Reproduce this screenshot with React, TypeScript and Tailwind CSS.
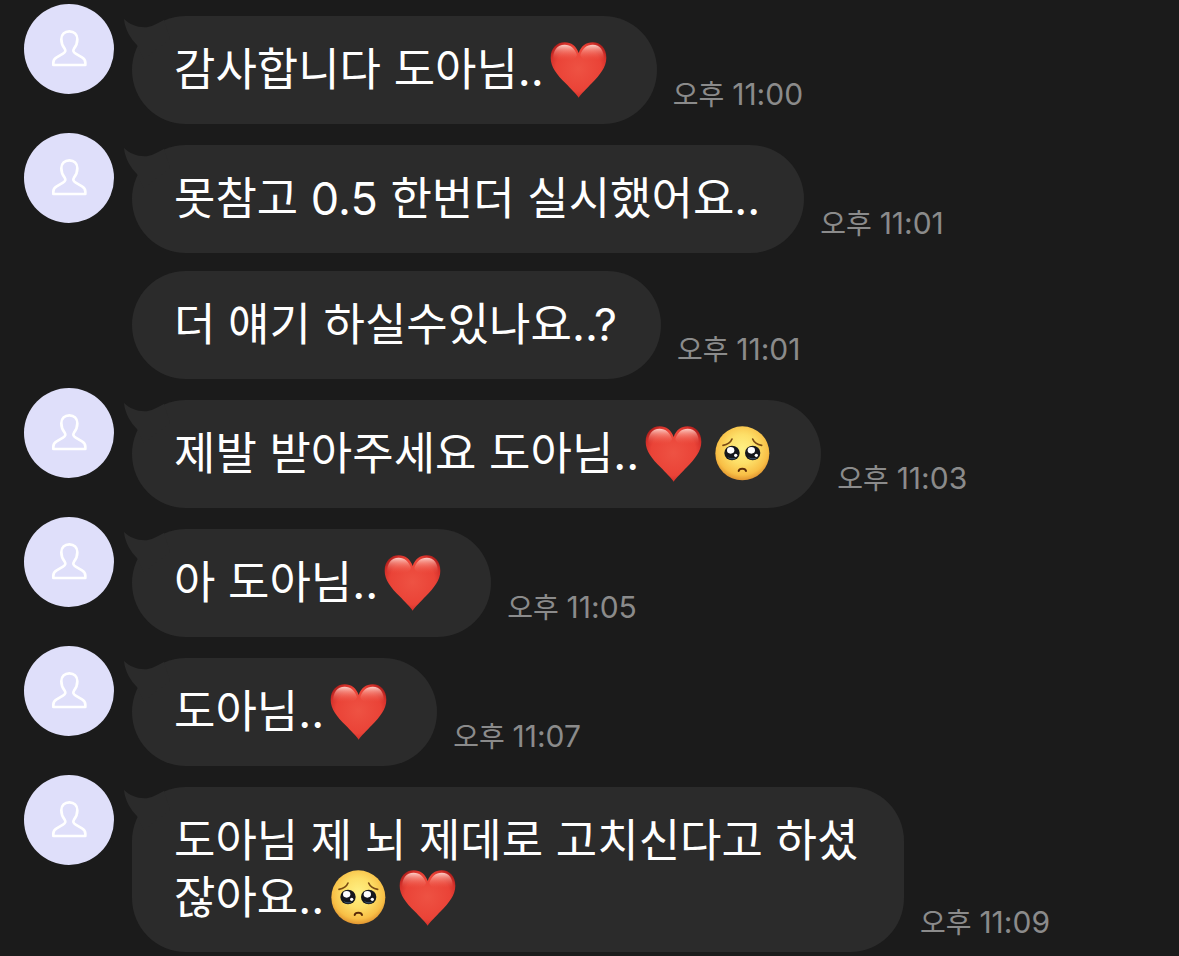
import type { ReactNode } from "react";

interface Message {
  id: number;
  body: ReactNode;
  time: string;
  showAvatar: boolean;
}

function Heart() {
  return (
    <svg
      viewBox="0 0 171 171"
      role="img"
      aria-label="❤️"
      className="inline-block size-[57px] mx-1.5 align-[-12px]"
    >
      <defs>
        <radialGradient id="heartBody" cx="50%" cy="48%" r="58%">
          <stop offset="0" stopColor="#ee5243" />
          <stop offset="0.7" stopColor="#ea4337" />
          <stop offset="0.9" stopColor="#d4302a" />
          <stop offset="1" stopColor="#b0201d" />
        </radialGradient>
        <linearGradient id="heartShine" x1="0" y1="0" x2="0" y2="1">
          <stop offset="0" stopColor="#ffd9d2" stopOpacity="0.95" />
          <stop offset="0.35" stopColor="#fba79a" stopOpacity="0.6" />
          <stop offset="1" stopColor="#ee5243" stopOpacity="0" />
        </linearGradient>
      </defs>
      <path
        d="M86 170C80 160 62 143 46 126C21 101 2 78 2 50C2 22 20 4 44 4C64 4 79 16 86 36C93 16 108 4 128 4C152 4 169 22 169 50C169 78 150 101 126 126C110 143 92 160 86 170Z"
        fill="url(#heartBody)"
      />
      <path
        d="M10 56C8 28 22 11 44 11C62 11 75 22 81 42C78 52 70 58 46 58C28 58 16 60 10 56Z"
        fill="url(#heartShine)"
      />
      <path
        d="M161 56C163 28 150 11 128 11C110 11 97 22 91 42C94 52 102 58 126 58C144 58 156 60 161 56Z"
        fill="url(#heartShine)"
      />
    </svg>
  );
}

function Pleading() {
  return (
    <svg
      viewBox="0 0 171 171"
      role="img"
      aria-label="🥺"
      className="inline-block size-[57px] mx-1.5 align-[-12px]"
    >
      <defs>
        <radialGradient id="faceBody" cx="50%" cy="42%" r="60%">
          <stop offset="0" stopColor="#fff185" />
          <stop offset="0.45" stopColor="#fddf68" />
          <stop offset="0.8" stopColor="#f8bf46" />
          <stop offset="1" stopColor="#dc8c2c" />
        </radialGradient>
      </defs>
      <circle cx="85" cy="85" r="81" fill="url(#faceBody)" />
      <g fill="none" stroke="#7a4a14" strokeWidth="5" strokeLinecap="round">
        <path d="M27 61C39 59 50 52 54 42" />
        <path d="M143 61C131 59 120 52 116 42" />
      </g>
      <g fill="#15171c">
        <ellipse cx="54" cy="84" rx="23" ry="22" />
        <ellipse cx="116" cy="84" rx="23" ry="22" />
      </g>
      <g fill="#3d5670">
        <path d="M40 95C46 105 62 106 68 96C61 101 48 101 40 95Z" />
        <path d="M102 95C108 105 124 106 130 96C123 101 110 101 102 95Z" />
      </g>
      <g fill="#fff">
        <ellipse cx="50" cy="76" rx="11" ry="10" />
        <ellipse cx="112" cy="76" rx="11" ry="10" />
        <circle cx="65" cy="91" r="5" />
        <circle cx="127" cy="91" r="5" />
      </g>
      <path
        d="M74 138C76 129 94 129 96 138"
        fill="none"
        stroke="#5a2a08"
        strokeWidth="6"
        strokeLinecap="round"
      />
    </svg>
  );
}

function Avatar() {
  return (
    <div className="size-[90px] shrink-0 rounded-full bg-[#dfdffa]">
      <svg
        viewBox="0 0 270 270"
        role="img"
        aria-label="프로필"
        fill="none"
        stroke="#fff"
        strokeWidth="8"
        strokeLinejoin="round"
      >
        <path d="M88 183V176C88 168 91 164 98 160L117 149C124 145 126 140 122 134C116 127 112 118 112 106C112 91 122 82 136 82S160 91 160 106C160 118 156 127 150 134C146 140 148 145 155 149L174 160C181 164 184 168 184 176V183Z" />
      </svg>
    </div>
  );
}

function Tail() {
  return (
    <svg
      viewBox="0 0 48 44"
      aria-hidden="true"
      className="absolute -left-2 top-[3px] h-[44px] w-[48px]"
    >
      <path
        d="M0 0C6 6 15 9 24 8C29 7 34 4 40 1L46 20L20 40L13 26C6 19 1 10 0 0Z"
        fill="#2b2b2b"
      />
    </svg>
  );
}

const messages: Message[] = [
  {
    id: 1,
    body: (
      <>
        감사합니다 도아님..
        <Heart />
      </>
    ),
    time: "11:00",
    showAvatar: true,
  },
  { id: 2, body: "못참고 0.5 한번더 실시했어요..", time: "11:01", showAvatar: true },
  { id: 3, body: "더 얘기 하실수있나요..?", time: "11:01", showAvatar: false },
  {
    id: 4,
    body: (
      <>
        제발 받아주세요 도아님..
        <Heart />
        <Pleading />
      </>
    ),
    time: "11:03",
    showAvatar: true,
  },
  {
    id: 5,
    body: (
      <>
        아 도아님..
        <Heart />
      </>
    ),
    time: "11:05",
    showAvatar: true,
  },
  {
    id: 6,
    body: (
      <>
        도아님..
        <Heart />
      </>
    ),
    time: "11:07",
    showAvatar: true,
  },
  {
    id: 7,
    body: (
      <>
        도아님 제 뇌 제데로 고치신다고 하셨잖아요..
        <Pleading />
        <Heart />
      </>
    ),
    time: "11:09",
    showAvatar: true,
  },
];

function MessageRow({ message }: { message: Message }) {
  const { body, time, showAvatar } = message;

  return (
    <li className="flex items-start">
      {showAvatar ? <Avatar /> : <div className="w-[90px] shrink-0" />}
      <div
        className={`flex items-end gap-4 ml-[18px] ${showAvatar ? "pt-3" : "pt-[9px]"}`}
      >
        <div className="relative max-w-[772px] rounded-[54px] bg-[#2b2b2b] pl-[42px] pr-11 pt-[25px] pb-[26px]">
          {showAvatar && <Tail />}
          <p className="relative text-[45px] leading-[57px] text-white">{body}</p>
        </div>
        <time
          dateTime={time.replace("11:", "23:")}
          className="mb-[11px] shrink-0 text-[28px] leading-9 text-[#8b8b8b]"
        >
          오후 <span className="text-[30px]">{time}</span>
        </time>
      </div>
    </li>
  );
}

export default function App() {
  return (
    <main className="min-h-screen bg-[#1b1b1b] px-6 pt-1 font-['Inter','Noto_Sans_CJK_KR',sans-serif]">
      <ul className="flex flex-col gap-[9px]">
        {messages.map((message) => (
          <MessageRow key={message.id} message={message} />
        ))}
      </ul>
    </main>
  );
}
